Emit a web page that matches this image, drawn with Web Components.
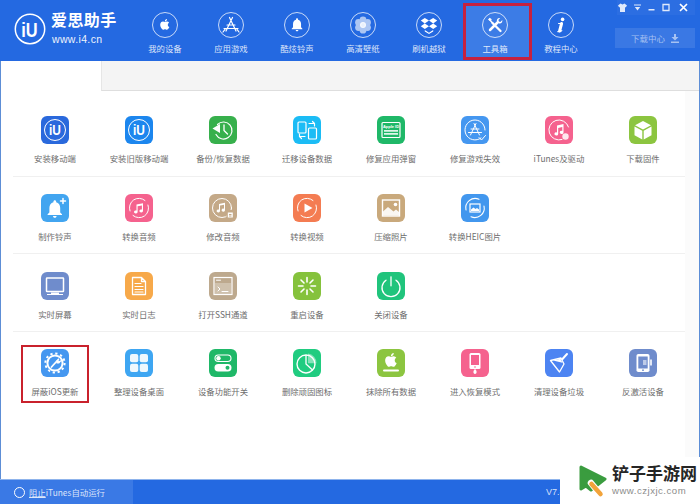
<!DOCTYPE html>
<html lang="zh">
<head>
<meta charset="utf-8">
<title>爱思助手</title>
<style>
    html, body { margin: 0; padding: 0; height: 100%; background: #fff; overflow: hidden; }
    body { font-family: "Noto Sans CJK SC", "Liberation Sans", sans-serif; }
</style>
</head>
<body>
<i4-app>
    <i4-header slot="header">
        <i4-nav-item icon="apple">我的设备</i4-nav-item>
        <i4-nav-item icon="store">应用游戏</i4-nav-item>
        <i4-nav-item icon="bell">酷炫铃声</i4-nav-item>
        <i4-nav-item icon="flower">高清壁纸</i4-nav-item>
        <i4-nav-item icon="box">刷机越狱</i4-nav-item>
        <i4-nav-item icon="tools" selected>工具箱</i4-nav-item>
        <i4-nav-item icon="info">教程中心</i4-nav-item>
    </i4-header>

    <i4-tool-row style="--row-h:78px; --row-pad:17px">
        <i4-tool icon="iu" color="#2a69dc">安装移动端</i4-tool>
        <i4-tool icon="iu" color="#1c86ee">安装旧版移动端</i4-tool>
        <i4-tool icon="backup" color="#37b04c">备份/恢复数据</i4-tool>
        <i4-tool icon="migrate" color="#1bbcf5">迁移设备数据</i4-tool>
        <i4-tool icon="appleid" color="#1fb868">修复应用弹窗</i4-tool>
        <i4-tool icon="fixstore" color="#4597f0">修复游戏失效</i4-tool>
        <i4-tool icon="itunes" color="#f5628e">iTunes及驱动</i4-tool>
        <i4-tool icon="cube" color="#8cc540">下载固件</i4-tool>
    </i4-tool-row>
    <i4-tool-row style="--row-h:77px; --row-pad:17px">
        <i4-tool icon="ring" color="#42a5f0">制作铃声</i4-tool>
        <i4-tool icon="music" color="#f5628e">转换音频</i4-tool>
        <i4-tool icon="musicedit" color="#c4a988">修改音频</i4-tool>
        <i4-tool icon="video" color="#f47c52">转换视频</i4-tool>
        <i4-tool icon="photo" color="#c9a97c">压缩照片</i4-tool>
        <i4-tool icon="heic" color="#4297ee">转换HEIC图片</i4-tool>
    </i4-tool-row>
    <i4-tool-row style="--row-h:78px; --row-pad:18px">
        <i4-tool icon="screen" color="#6f8ccc">实时屏幕</i4-tool>
        <i4-tool icon="log" color="#f7a94a">实时日志</i4-tool>
        <i4-tool icon="ssh" color="#bda98e">打开SSH通道</i4-tool>
        <i4-tool icon="restart" color="#85c23c">重启设备</i4-tool>
        <i4-tool icon="power" color="#20c47c">关闭设备</i4-tool>
    </i4-tool-row>
    <i4-tool-row last style="--row-h:77px; --row-pad:17px">
        <i4-tool icon="gear" color="#4597f0" marked>屏蔽iOS更新</i4-tool>
        <i4-tool icon="grid" color="#3ea6f2">整理设备桌面</i4-tool>
        <i4-tool icon="toggle" color="#1fb868">设备功能开关</i4-tool>
        <i4-tool icon="pie" color="#20cc80">删除顽固图标</i4-tool>
        <i4-tool icon="erase" color="#8cc540">抹除所有数据</i4-tool>
        <i4-tool icon="recovery" color="#f5628e">进入恢复模式</i4-tool>
        <i4-tool icon="broom" color="#4d84f2">清理设备垃圾</i4-tool>
        <i4-tool icon="deactivate" color="#6f8ccc">反激活设备</i4-tool>
    </i4-tool-row>

    <i4-status-bar slot="footer"></i4-status-bar>
    <i4-watermark slot="overlay"></i4-watermark>
</i4-app>

<script>
(function () {
    const APPLE = "M17.05 20.28c-.98.95-2.05.8-3.08.35-1.09-.46-2.09-.48-3.24 0-1.44.62-2.2.44-3.06-.35C2.79 15.25 3.51 7.59 9.05 7.31c1.35.07 2.29.74 3.08.8 1.18-.24 2.31-.93 3.57-.84 1.51.12 2.65.72 3.4 1.8-3.12 1.87-2.38 5.98.48 7.13-.57 1.5-1.31 2.99-2.54 4.09zM12.03 7.25c-.15-2.23 1.66-4.07 3.74-4.25.29 2.58-2.34 4.5-3.74 4.25z";
    const BELL = "M12 22c1.1 0 2-.9 2-2h-4c0 1.1.9 2 2 2zm6-6v-5c0-3.07-1.63-5.64-4.5-6.32V4c0-.83-.67-1.5-1.5-1.5s-1.5.67-1.5 1.5v.68C7.64 5.36 6 7.92 6 11v5l-2 2v1h16v-1l-2-2z";

    // nav icons, 26x26, drawn in white inside the ring
    const NAV_ICONS = {
        apple: `<path transform="translate(5.6 5.2) scale(.6)" fill="#fff" d="${APPLE}"/>`,
        store: `<g fill="none" stroke="#fff" stroke-width="1.2" stroke-linecap="round">
                <path d="M14.5 5.5 8 19M11.5 5.5 18 19M6 16.5h14M5 20l2-2.600M21 20l-2-2.600M9 13h8"/></g>`,
        bell: `<path transform="translate(5 4.6) scale(.67)" fill="#fff" d="${BELL}"/>`,
        flower: `<g fill="#fff" opacity=".62"><circle cx="13" cy="7.800" r="3.400"/><circle cx="13" cy="18.200" r="3.400"/><circle cx="8.500" cy="10.400" r="3.400"/><circle cx="17.500" cy="10.400" r="3.400"/><circle cx="8.500" cy="15.600" r="3.400"/><circle cx="17.500" cy="15.600" r="3.400"/></g><circle cx="13" cy="13" r="3" fill="#fff" opacity=".9"/>`,
        box: `<path fill="#fff" d="M8.800 6 13 8.600l-4.200 2.800L4.800 8.600zM17.200 6l4 2.600-4 2.800L13 8.600zM8.800 11.600 13 14.200 8.800 17l-4-2.800zM17.200 11.600l4 2.600-4 2.800-4.200-2.800z"/><path fill="#fff" d="M8.800 18l4.200 2.700 4.200-2.700v1.600L13 22l-4.200-2.400z"/>`,
        tools: `<g fill="none" stroke="#fff" stroke-linecap="round"><path stroke-width="2.300" d="M10.500 11 18.500 19"/><path stroke-width="1.400" d="M7.500 7.500 10.500 11"/><path stroke-width="2.500" d="M15.500 10.500 8 18"/></g><path fill="#fff" d="M14.900 9.400c-.5-2.200 1.100-3.900 3.300-3.400l-1.800 1.900.5 1.500 1.500.5 1.900-1.800c.5 2.200-1.200 3.800-3.400 3.300z"/><path fill="#fff" d="m6 7.500 1.700-1.700 2 1.500-.5 1.300-1.300.5z"/>`,
        info: `<circle cx="14.600" cy="7.400" r="1.800" fill="#fff"/><path fill="none" stroke="#fff" stroke-width="3" stroke-linecap="round" d="M13.600 11.500 11.600 19"/><path fill="none" stroke="#fff" stroke-width="1.200" stroke-linecap="round" d="M10.600 11.500h3M9.800 19.600c1.200.2 3 .1 4-1"/>`
    };

    const wt = 'fill="none" stroke="#fff" stroke-linecap="round" stroke-linejoin="round"';
    const iuMark = `<circle cx="14" cy="14" r="10.500" fill="none" stroke="#fff" stroke-width="1"/><text transform="translate(14 19.200) scale(.85 1)" text-anchor="middle" font-family="Liberation Sans, sans-serif" font-weight="700" font-size="14" fill="#fff">iU</text>`;

    // tool icons, 28x28, on the tile's rounded background
    const TOOL_ICONS = {
        iu: iuMark,
        backup: `<g ${wt} stroke-width="1.200"><path d="M8.500 8.500A8.500 8.500 0 1 1 7 18.500"/><path stroke-width="1.300" d="M15 9v5.500l3.500 3.500"/></g><path fill="#fff" d="M3.500 12.500 11 8v9z"/>`,
        migrate: `<g ${wt} stroke-width="1.200"><rect x="5" y="6" width="8" height="11" rx="1"/><rect x="15.500" y="12" width="8" height="11" rx="1"/><path d="M16 7.500h5.500v2.500M19.500 5.500l2 2M12 20.500H6.500V18M8.500 22.500l-2-2"/></g>`,
        appleid: `<rect x="5" y="6.500" width="18" height="15" rx="1" ${wt} stroke-width="1.200"/><text x="14" y="11.700" text-anchor="middle" font-family="Liberation Sans, sans-serif" font-weight="700" font-size="4" fill="#fff">Apple ID</text><path fill="#fff" opacity=".85" d="M7 14h14v1.800H7zM7 17h14v1.800H7z"/>`,
        fixstore: `<g ${wt} stroke-width="1"><path d="M24 14a10 10 0 1 0-4 8"/><path d="M18 21.500l2.500 2.500 4-4.500"/><path d="M15 7.500 9.500 19M13 7.500 18.500 19M7.500 16.500h13M10 13h8"/></g>`,
        itunes: `<g ${wt} stroke-width="1"><path d="M23.500 11A10 10 0 1 0 17 23.500"/></g><path fill="#fff" d="M12 9.500l6.500-1.500v8.500a1.900 1.600 0 1 1-1.200-1.500V11l-4.100 1v6a1.900 1.600 0 1 1-1.200-1.500z"/><circle cx="20.500" cy="20.500" r="3.200" fill="#fff" opacity=".85"/>`,
        cube: `<path fill="#fff" d="M14 5 22 9.200 14 13.500 6 9.200z"/><path fill="#fff" d="M5.500 10.500 13.300 14.700V23.500L5.500 19.200zM22.500 10.500 14.700 14.700V23.500L22.500 19.200z"/>`,
        ring: `<path transform="translate(3 4) scale(.9)" fill="#fff" d="${BELL}"/><path ${wt} stroke-width="1.500" d="M22 4.500v5M19.500 7h5"/>`,
        music: `<g ${wt} stroke-width="1"><path d="M5 17A9.500 9.500 0 0 1 20 6.500M23 11a9.500 9.500 0 0 1-15 10.500"/></g><path fill="#fff" d="M11.500 10.500l6.500-1.300v7.800a1.800 1.500 0 1 1-1.100-1.400v-4.200l-4.300.9v5.700a1.800 1.500 0 1 1-1.100-1.400z"/>`,
        musicedit: `<circle cx="13" cy="14" r="9.500" ${wt} stroke-width="1"/><path fill="#fff" d="M10 10l6-1.200v7.400a1.700 1.500 0 1 1-1-1.400v-4l-4 .8v5.400a1.700 1.500 0 1 1-1-1.400z"/><rect x="17.500" y="16" width="7.500" height="8.500" rx="1" fill="#c4a988"/><path fill="#fff" d="M18.800 18.500h5v5h-5z"/><path fill="#c4a988" d="M20 20h2.500v.9H20zM20 21.600h2.500v.9H20z"/>`,
        video: `<g ${wt} stroke-width="1"><path d="M5 17A9.500 9.500 0 0 1 20 6.500M23 11a9.500 9.500 0 0 1-15 10.500"/></g><path fill="#fff" d="M11.500 9.500 19.500 14l-8 4.500z"/>`,
        photo: `<rect x="5.500" y="6" width="17" height="16" fill="none" stroke="#fff" stroke-width="1.400"/><path fill="#fff" opacity=".9" d="M6 21.500v-4l5-4.500 5.500 4.500 2.500-2 3 2.500v3.500z"/><circle cx="18.500" cy="10.500" r="1.800" fill="#fff"/>`,
        heic: `<g ${wt} stroke-width="1.100"><path d="M5 16A9.500 9.500 0 0 1 18 5.200M23 12a9.500 9.500 0 0 1-13 10.800"/></g><rect x="9" y="10" width="10" height="8" fill="none" stroke="#fff" stroke-width="1.200"/><path fill="#fff" d="M10 17v-1.500l2.500-2 2 1.500 1.500-1 2 1.500V17z"/>`,
        screen: `<rect x="5.500" y="6" width="17" height="13.500" rx=".5" fill="none" stroke="#fff" stroke-width="1.500"/><path fill="#fff" d="M10 20.500h8V22H10zM6 22h16v1H6z"/>`,
        log: `<path ${wt} stroke-width="1.300" d="M7.500 5.500h9l4 4v13h-13zM16.500 5.500v4h4"/><path ${wt} stroke-width="1.200" d="M10 11.500h6M10 14.500h8M10 17.500h8M10 20h8"/>`,
        ssh: `<rect x="5" y="5.500" width="18" height="17" fill="none" stroke="#fff" stroke-width="1.200"/><path fill="#fff" d="M6 11h16v11H6z" opacity=".28"/><path ${wt} stroke-width="1" d="M9 15l2 2-2 2M13 19.500h6M7.500 8.200h4"/>`,
        restart: `<g ${wt} stroke-width="1.600"><path d="M14 5.500v4.500M14 18v4.500M5.500 14H10M18 14h4.500M8 8l3 3M17 17l3 3M20 8l-3 3M11 17l-3 3"/></g>`,
        power: `<g ${wt} stroke-width="1.300"><path d="M9 8.200a9 9 0 1 0 10 0"/><path d="M14 4.800v9"/></g>`,
        gear: `<circle cx="14" cy="14" r="7.600" fill="none" stroke="#fff" stroke-width="2"/><circle cx="14" cy="14" r="9.600" fill="none" stroke="#fff" stroke-width="2" stroke-dasharray="2.300 2.720"/><path ${wt} stroke-width="1.800" d="M10.500 18 15.500 12.500"/><path fill="#fff" d="M14.800 12l2.600-2.800 1 1-1 1.300 1.200.4.900-1.200.5 1.700-1.900 2.200-2.500-.2z"/>`,
        grid: `<g fill="#fff" opacity=".92"><rect x="5" y="5" width="8.300" height="8.300" rx="2"/><rect x="14.700" y="5" width="8.300" height="8.300" rx="2"/><rect x="5" y="14.700" width="8.300" height="8.300" rx="2"/><rect x="14.700" y="14.700" width="8.300" height="8.300" rx="2"/></g>`,
        toggle: `<rect x="6" y="6" width="16" height="6.500" rx="3.250" fill="none" stroke="#fff" stroke-width="1.100"/><circle cx="9.500" cy="9.250" r="2.200" fill="#fff"/><rect x="5.500" y="15" width="17" height="7.500" rx="3.750" fill="#fff"/><circle cx="18.500" cy="18.750" r="2" fill="#1fb868"/>`,
        pie: `<circle cx="13" cy="15" r="9" fill="none" stroke="#fff" stroke-width="1.400"/><path fill="none" stroke="#fff" stroke-width="1.300" d="M13 6v9l6.500 6"/><path fill="#fff" opacity=".45" d="M15 4.500a9.500 9.500 0 0 1 8.500 9.700h-8.500z"/>`,
        erase: `<path transform="translate(4.800 1.800) scale(.76)" fill="#fff" d="${APPLE}"/><rect x="6" y="20.500" width="16" height="2" rx="1" fill="#fff"/>`,
        recovery: `<rect x="8.500" y="4" width="11" height="16" rx="1.500" fill="#fff"/><rect x="10" y="6" width="8" height="10" fill="#f5628e"/><circle cx="14" cy="18" r=".8" fill="#f5628e"/><rect x="12.500" y="21" width="3" height="4" rx="1.400" fill="#fff"/><path d="M14 20v2" stroke="#fff"/>`,
        broom: `<path ${wt} stroke-width="1.300" d="M5.500 11.500 16 9l3 6-4.500 8z"/><path fill="#fff" d="M8 11.500l7.500-1.800 2 4z"/><path ${wt} stroke-width="2" d="M17.500 10 22 5"/>`,
        deactivate: `<rect x="7.500" y="5" width="13" height="18" rx="1.800" fill="#fff"/><rect x="9.300" y="7.500" width="9.400" height="12" fill="#6f8ccc"/><circle cx="14" cy="21.200" r=".9" fill="#6f8ccc"/><path fill="#fff" d="M14 11h3.500v5H14z" opacity=".55"/><rect x="21" y="10.500" width="2" height="6" fill="#fff" opacity=".8"/>`
    };

    const appTemplate = document.createElement('template');
    appTemplate.innerHTML = `
    <style>
        :host {
            display: flex;
            flex-direction: column;
            position: relative;
            width: 700px;
            height: 504px;
            box-sizing: border-box;
            overflow: hidden;
            background: #fff;
            color: #6e6e6e;
            font-family: "Noto Sans CJK SC", "Liberation Sans", sans-serif;
        }
        #body {
            flex: 1;
            min-height: 0;
            display: flex;
            flex-direction: column;
            border-left: 1px solid #5d8ed6;
            border-right: 1px solid #5d8ed6;
        }
        #tabs {
            flex: none;
            height: 29px;
            margin-left: 100px;
            background: #f4f4f4;
            border-left: 1px solid #e6e6e6;
            border-bottom: 1px solid #dedede;
        }
        #content {
            flex: 1;
            display: flex;
            flex-direction: column;
            padding: 8px 0 0 12px;
            background: linear-gradient(to right, #fff 684px, #fbfbfb 684px);
        }
    </style>
    <slot name="header"></slot>
    <div id="body">
        <div id="tabs"></div>
        <div id="content"><slot></slot></div>
    </div>
    <slot name="footer"></slot>
    <slot name="overlay"></slot>`;

    class I4App extends HTMLElement {
        constructor () {
            super();
            this.attachShadow({mode: 'open'});
            this.shadowRoot.appendChild(appTemplate.content.cloneNode(true));
        }
    }

    const headerTemplate = document.createElement('template');
    headerTemplate.innerHTML = `
    <style>
        :host {
            display: flex;
            flex: none;
            position: relative;
            height: 61px;
            background: #2469e1;
            color: #fff;
        }
        #logo {
            flex: none;
            width: 132px;
            box-sizing: border-box;
            display: flex;
            align-items: center;
            gap: 5px;
            padding: 0 0 3px 14px;
        }
        #logo svg { flex: none; }
        #brand { display: flex; flex-direction: column; gap: 5px; }
        /* latin font first so the text box stays the height of its line */
        #brand b {
            display: block;
            font-family: "Liberation Sans", "Noto Sans CJK SC", sans-serif;
            font-size: 16px;
            line-height: 16px;
            font-weight: 700;
            letter-spacing: .4px;
            white-space: nowrap;
        }
        #brand span {
            display: block;
            font: 10.5px/11px "Liberation Sans", sans-serif;
            letter-spacing: .35px;
            margin-left: 1px;
            opacity: .92;
        }
        #nav { display: flex; flex: 1; }
        #side {
            flex: none;
            width: 85px;
            padding: 0 5px 0 0;
            box-sizing: content-box;
            display: flex;
            flex-direction: column;
            align-items: flex-end;
        }
        #win {
            display: flex;
            height: 15px;
            width: 78px;
            gap: 7px;
            align-items: center;
            padding-left: 1px;
            box-sizing: border-box;
            background: rgba(255, 255, 255, .04);
        }
        #win svg:last-child { margin-left: 2px; }
        #download {
            margin-top: 13px;
            width: 80px;
            height: 20px;
            box-sizing: border-box;
            display: flex;
            align-items: center;
            justify-content: center;
            gap: 6px;
            background: rgba(255, 255, 255, .1);
            color: rgba(255, 255, 255, .55);
            font-size: 8.5px;
            white-space: nowrap;
        }
    </style>
    <div id="logo">
        <svg width="32" height="32" viewBox="0 0 32 32">
            <circle cx="16" cy="16" r="14.700" fill="none" stroke="#fff" stroke-width="1.500"/>
            <text transform="translate(15.500 23.500) scale(.78 1)" text-anchor="middle" font-family="Liberation Sans, sans-serif" font-weight="700" font-size="21" fill="#fff">iU</text>
        </svg>
        <div id="brand"><b>爱思助手</b><span>www.i4.cn</span></div>
    </div>
    <div id="nav"><slot></slot></div>
    <div id="side">
        <div id="win">
            <svg width="9" height="9" viewBox="0 0 9 9"><path fill="#dfe9fb" d="M2.500.5 4.500 1.500 6.500.5 9 2.500 7.700 4.500 7 4v5H2V4l-.7.500L0 2.500z"/></svg>
            <svg width="7" height="9" viewBox="0 0 7 9"><path fill="#dfe9fb" d="M0 1.500h7v1H0zM.8 4h5.400L3.500 7.500z"/></svg>
            <svg width="7" height="9" viewBox="0 0 7 9"><path fill="#dfe9fb" d="M.5 6h6v1.500h-6z"/></svg>
            <svg width="8" height="9" viewBox="0 0 8 9"><path fill="none" stroke="#dfe9fb" stroke-width="1.300" d="M1 1.500h6v6H1z"/></svg>
            <svg width="9" height="9" viewBox="0 0 9 9"><path fill="none" stroke="#fff" stroke-width="1.700" d="M1 1l7 7M8 1 1 8"/></svg>
        </div>
        <div id="download">下载中心
            <svg width="8" height="9" viewBox="0 0 8 9"><path fill="rgba(255,255,255,.55)" d="M3 0h2v3h2.500L4 6.500.5 3H3zM0 7.500h8V9H0z"/></svg>
        </div>
    </div>`;

    class I4Header extends HTMLElement {
        constructor () {
            super();
            this.attachShadow({mode: 'open'});
            this.shadowRoot.appendChild(headerTemplate.content.cloneNode(true));
        }
    }

    const navTemplate = document.createElement('template');
    navTemplate.innerHTML = `
    <style>
        :host {
            display: flex;
            flex-direction: column;
            align-items: center;
            position: relative;
            width: 66px;
            box-sizing: border-box;
            padding-top: 12px;
            color: rgba(255, 255, 255, .85);
            font-size: 8.4px;
            line-height: 13px;
        }
        :host([selected]) #bg {
            position: absolute;
            left: 3px;
            top: 5px;
            width: 66px;
            height: 54px;
            background: #3c7ce6;
        }
        :host([selected]) #mark {
            position: absolute;
            left: 1px;
            top: 3px;
            width: 69px;
            height: 57px;
            box-sizing: border-box;
            border: 3px solid #c6213f;
        }
        svg { position: relative; display: block; }
        #label { position: relative; margin-top: 4px; white-space: nowrap; }
    </style>
    <div id="bg"></div>
    <svg width="26" height="26" viewBox="0 0 26 26">
        <circle cx="13" cy="13" r="12.500" fill="none" stroke="rgba(255,255,255,.75)" stroke-width="1"/>
        <g id="glyph"></g>
    </svg>
    <div id="label"><slot></slot></div>
    <div id="mark"></div>`;

    class I4NavItem extends HTMLElement {
        constructor () {
            super();
            this.attachShadow({mode: 'open'});
            this.shadowRoot.appendChild(navTemplate.content.cloneNode(true));
        }
        connectedCallback () {
            this.shadowRoot.getElementById('glyph').innerHTML = NAV_ICONS[this.getAttribute('icon')] || '';
        }
    }

    const rowTemplate = document.createElement('template');
    rowTemplate.innerHTML = `
    <style>
        :host {
            display: grid;
            grid-template-columns: repeat(8, 84px);
            align-content: start;
            flex: none;
            box-sizing: border-box;
            width: 672px;
            height: var(--row-h, 78px);
            padding-top: var(--row-pad, 17px);
            border-bottom: 1px solid #f0f0f0;
        }
        :host([last]) { border-bottom: 0; }
    </style>
    <slot></slot>`;

    class I4ToolRow extends HTMLElement {
        constructor () {
            super();
            this.attachShadow({mode: 'open'});
            this.shadowRoot.appendChild(rowTemplate.content.cloneNode(true));
        }
    }

    const toolTemplate = document.createElement('template');
    toolTemplate.innerHTML = `
    <style>
        :host {
            display: flex;
            flex-direction: column;
            align-items: center;
            position: relative;
            color: #6e6e6e;
            font-size: 8.4px;
            line-height: 13px;
        }
        svg { display: block; }
        #label { margin-top: 8px; white-space: nowrap; }
        :host([marked]) #mark {
            position: absolute;
            left: 8px;
            top: -4px;
            width: 68px;
            height: 58px;
            box-sizing: border-box;
            border: 2px solid #c9212c;
        }
    </style>
    <svg width="28" height="28" viewBox="0 0 28 28">
        <rect id="tile" width="28" height="28" rx="6"/>
        <g id="glyph"></g>
    </svg>
    <div id="label"><slot></slot></div>
    <div id="mark"></div>`;

    class I4Tool extends HTMLElement {
        constructor () {
            super();
            this.attachShadow({mode: 'open'});
            this.shadowRoot.appendChild(toolTemplate.content.cloneNode(true));
        }
        connectedCallback () {
            this.shadowRoot.getElementById('tile').setAttribute('fill', this.getAttribute('color'));
            this.shadowRoot.getElementById('glyph').innerHTML = TOOL_ICONS[this.getAttribute('icon')] || '';
        }
    }

    const statusTemplate = document.createElement('template');
    statusTemplate.innerHTML = `
    <style>
        :host {
            display: flex;
            flex: none;
            height: 25px;
            background: #2469e1;
            border-top: 1px solid #8fb4ec;
            box-sizing: border-box;
            color: rgba(255, 255, 255, .82);
            font-size: 8.4px;
        }
        #itunes {
            width: 133px;
            box-sizing: border-box;
            display: flex;
            align-items: center;
            gap: 4px;
            padding-left: 14px;
            background: #3a79e5;
            white-space: nowrap;
        }
        #itunes u { text-underline-offset: 1px; }
        #itunes i { width: 9px; height: 9px; border: 1px solid #fff; border-radius: 50%; }
        #version {
            margin-left: auto;
            margin-right: 130px;
            align-self: center;
            font: 9px "Liberation Sans", sans-serif;
            width: 24px;
        }
    </style>
    <div id="itunes"><i></i><span><u>阻止</u>iTunes自动运行</span></div>
    <div id="version">V7.8</div>`;

    class I4StatusBar extends HTMLElement {
        constructor () {
            super();
            this.attachShadow({mode: 'open'});
            this.shadowRoot.appendChild(statusTemplate.content.cloneNode(true));
        }
    }

    const markTemplate = document.createElement('template');
    markTemplate.innerHTML = `
    <style>
        /* site stamp pasted over the corner of the screenshot */
        :host {
            position: absolute;
            right: 0;
            bottom: 0;
            width: 140px;
            height: 47px;
            background: #fff;
            display: flex;
            align-items: center;
            gap: 5px;
            padding-left: 18px;
            box-sizing: border-box;
        }
        svg { flex: none; }
        #text { display: flex; flex-direction: column; gap: 1px; }
        #name {
            display: block;
            font-family: "Liberation Sans", "Noto Sans CJK SC", sans-serif;
            font-size: 17px;
            line-height: 18px;
            font-weight: 700;
            color: #262626;
            white-space: nowrap;
        }
        #url {
            display: block;
            font: 9.600px/11px "Liberation Sans", sans-serif;
            letter-spacing: .5px;
            color: #8c8c8c;
            white-space: nowrap;
        }
    </style>
    <svg width="29" height="34" viewBox="0 0 29 34">
        <path fill="#3a9c3f" stroke="#3a9c3f" stroke-width="3" stroke-linejoin="round" d="M3 3 27 15 13 26 8 22 3 25z"/>
        <path fill="none" stroke="#fff" stroke-width="6.500" stroke-linecap="round" d="M13 19l9 11"/>
        <path fill="none" stroke="#f2a33a" stroke-width="4.500" stroke-linecap="round" d="M13.500 20l9 10"/>
    </svg>
    <div id="text"><div id="name">铲子手游网</div><div id="url">www.czjxjc.com</div></div>`;

    class I4Watermark extends HTMLElement {
        constructor () {
            super();
            this.attachShadow({mode: 'open'});
            this.shadowRoot.appendChild(markTemplate.content.cloneNode(true));
        }
    }

    customElements.define('i4-app', I4App);
    customElements.define('i4-header', I4Header);
    customElements.define('i4-nav-item', I4NavItem);
    customElements.define('i4-tool-row', I4ToolRow);
    customElements.define('i4-tool', I4Tool);
    customElements.define('i4-status-bar', I4StatusBar);
    customElements.define('i4-watermark', I4Watermark);
})();
</script>
</body>
</html>
